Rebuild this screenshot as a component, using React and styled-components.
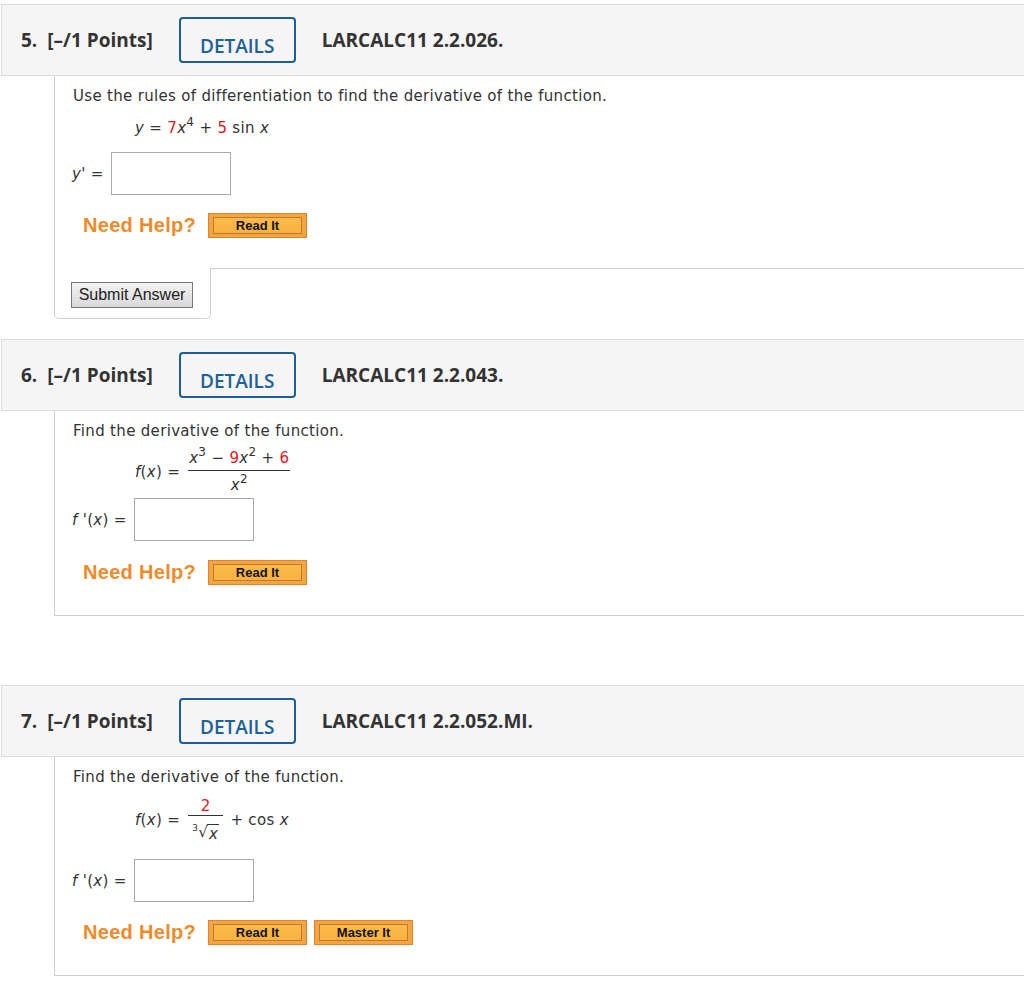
import React from 'react'
import styled, { createGlobalStyle } from 'styled-components'

const GlobalStyle = createGlobalStyle`
  html, body {
    margin: 0;
    padding: 0;
    background: #fff;
    overflow-x: hidden;
  }
`

const Page = styled.div`
  width: 1050px;
  padding: 4px 0 0 1px;
`

const Question = styled.section`
  margin-bottom: ${p => p.$after || 0}px;
`

const Header = styled.div`
  display: flex;
  align-items: center;
  height: 70px;
  padding-left: 19px;
  background: #f5f5f5;
  border: 1px solid #dcdcdc;
  font-family: "Open Sans", sans-serif;
  font-weight: 700;
  font-size: 19px;
  color: #333;
`

const Num = styled.span`
  margin-right: 10px;
`

const DetailsButton = styled.button`
  box-sizing: border-box;
  width: 117px;
  height: 46px;
  margin: 0 26px;
  padding: 12px 0 0;
  background: transparent;
  border: 2px solid #1b5f96;
  border-radius: 4px;
  font-family: "Open Sans", sans-serif;
  font-weight: 600;
  font-size: 19px;
  color: #1c6299;
`

const Body = styled.div`
  margin-left: 53px;
  padding: 10px 0 30px 18px;
  border-left: 1px solid #cfcfcf;
  border-bottom: 1px solid #cfcfcf;
  font-family: "DejaVu Sans", Verdana, sans-serif;
  font-size: 15px;
  letter-spacing: 0.32px;
  color: #333;
`

const Prompt = styled.div`
  line-height: 20px;
`

const Formula = styled.div`
  display: flex;
  align-items: center;
  margin: ${p => p.$top}px 0 0 62px;
  line-height: 20px;
  white-space: pre;
`

const Var = styled.i`
  font-style: italic;
`

const Red = styled.span`
  color: #e8141b;
`

const Sup = styled.span`
  font-size: 12px;
  line-height: 0;
  vertical-align: 7px;
`

const Fraction = styled.span`
  display: inline-flex;
  flex-direction: column;
  align-items: stretch;
  margin: 0 2px 0 8px;
`

const Numerator = styled.span`
  padding: ${p => p.$pad || '0 1px 2px'};
  text-align: center;
  line-height: ${p => p.$lh || 20}px;
  white-space: pre;
`

const Denominator = styled.span`
  padding: ${p => p.$pad ?? 4}px 4px 0;
  border-top: 1px solid #333;
  text-align: center;
  line-height: 20px;
`

const Root = styled.span`
  display: inline-flex;
  align-items: flex-start;
  justify-content: center;
  padding-top: 2px;
`

const RootIndex = styled.span`
  font-size: 9px;
  line-height: 12px;
  margin-right: 0;
`

const RootSign = styled.span`
  line-height: 21px;
`

const Radicand = styled.span`
  margin-top: 2px;
  margin-left: -1px;
  padding: 0 1px 0 2px;
  border-top: 1px solid #333;
  line-height: 18px;
`

const AnswerRow = styled.div`
  display: flex;
  align-items: center;
  margin-top: ${p => p.$top}px;
  margin-left: -1px;
`

const AnswerLabel = styled.span`
  margin-right: 7px;
  white-space: pre;
`

const AnswerInput = styled.input`
  box-sizing: border-box;
  width: 120px;
  height: 43px;
  margin: 0;
  border: 1px solid #aaa;
  background: #fff;
`

const HelpRow = styled.div`
  display: flex;
  align-items: center;
  gap: 7px;
  margin-top: ${p => p.$top}px;
  margin-left: 10px;
  letter-spacing: 0;
`

const NeedHelp = styled.span`
  margin-right: 5px;
  font-family: "Liberation Sans", Arial, sans-serif;
  font-weight: 700;
  font-size: 20px;
  letter-spacing: 0.3px;
  color: #f08a2a;
`

const HelpButton = styled.button`
  box-sizing: border-box;
  width: 99px;
  height: 25px;
  padding: 3px 4px;
  background: #f7a43c;
  border: 1px solid #dc8430;
  cursor: pointer;
`

const HelpInner = styled.span`
  display: flex;
  align-items: center;
  justify-content: center;
  height: 100%;
  box-sizing: border-box;
  border: 1px solid #b97a3a;
  background: linear-gradient(#fbbb4a, #f8b23f);
  font-family: "Liberation Sans", Arial, sans-serif;
  font-weight: 700;
  font-size: 13px;
  color: #111;
`

const SubmitTab = styled.div`
  box-sizing: border-box;
  width: 157px;
  height: 51px;
  margin: -1px 0 0 53px;
  padding: 14px 0 0 16px;
  background: #fff;
  border: 1px solid #cfcfcf;
  border-top: none;
  border-radius: 0 0 5px 5px;
`

const SubmitButton = styled.button`
  box-sizing: border-box;
  width: 122px;
  height: 26px;
  padding: 0;
  background: linear-gradient(#f2f2f2, #d9d9d9);
  border: 1px solid #777;
  font-family: "Liberation Sans", Arial, sans-serif;
  font-size: 16px;
  color: #222;
`

function QuestionHeader({ number, code }) {
  return (
    <Header>
      <Num>{number}</Num>
      <span>[–/1 Points]</span>
      <DetailsButton>DETAILS</DetailsButton>
      <span>{code}</span>
    </Header>
  )
}

function HelpButtons({ top, master }) {
  return (
    <HelpRow $top={top}>
      <NeedHelp>Need Help?</NeedHelp>
      <HelpButton><HelpInner>Read It</HelpInner></HelpButton>
      {master && <HelpButton><HelpInner>Master It</HelpInner></HelpButton>}
    </HelpRow>
  )
}

export default function App() {
  return (
    <>
      <GlobalStyle />
      <Page>
        <Question $after={20}>
          <QuestionHeader number="5." code="LARCALC11 2.2.026." />
          <Body>
            <Prompt>Use the rules of differentiation to find the derivative of the function.</Prompt>
            <Formula $top={12}>
              <span>
                <Var>y</Var> = <Red>7</Red><Var>x</Var><Sup>4</Sup> + <Red>5</Red> sin <Var>x</Var>
              </span>
            </Formula>
            <AnswerRow $top={14}>
              <AnswerLabel><Var>y</Var>' =</AnswerLabel>
              <AnswerInput type="text" />
            </AnswerRow>
            <HelpButtons top={18} />
          </Body>
          <SubmitTab>
            <SubmitButton>Submit Answer</SubmitButton>
          </SubmitTab>
        </Question>

        <Question $after={69}>
          <QuestionHeader number="6." code="LARCALC11 2.2.043." />
          <Body>
            <Prompt>Find the derivative of the function.</Prompt>
            <Formula $top={7}>
              <span><Var>f</Var>(<Var>x</Var>) =</span>
              <Fraction>
                <Numerator><Var>x</Var><Sup>3</Sup> − <Red>9</Red><Var>x</Var><Sup>2</Sup> + <Red>6</Red></Numerator>
                <Denominator><Var>x</Var><Sup>2</Sup></Denominator>
              </Fraction>
            </Formula>
            <AnswerRow $top={3}>
              <AnswerLabel><Var>f</Var> '(<Var>x</Var>) =</AnswerLabel>
              <AnswerInput type="text" />
            </AnswerRow>
            <HelpButtons top={19} />
          </Body>
        </Question>

        <Question>
          <QuestionHeader number="7." code="LARCALC11 2.2.052.MI." />
          <Body>
            <Prompt>Find the derivative of the function.</Prompt>
            <Formula $top={10}>
              <span><Var>f</Var>(<Var>x</Var>) =</span>
              <Fraction>
                <Numerator $pad="0 2px 0" $lh={18}><Red>2</Red></Numerator>
                <Denominator $pad={0}>
                  <Root>
                    <RootIndex>3</RootIndex>
                    <RootSign>√</RootSign>
                    <Radicand><Var>x</Var></Radicand>
                  </Root>
                </Denominator>
              </Fraction>
              <span> + cos <Var>x</Var></span>
            </Formula>
            <AnswerRow $top={16}>
              <AnswerLabel><Var>f</Var> '(<Var>x</Var>) =</AnswerLabel>
              <AnswerInput type="text" />
            </AnswerRow>
            <HelpButtons top={18} master />
          </Body>
        </Question>
      </Page>
    </>
  )
}
